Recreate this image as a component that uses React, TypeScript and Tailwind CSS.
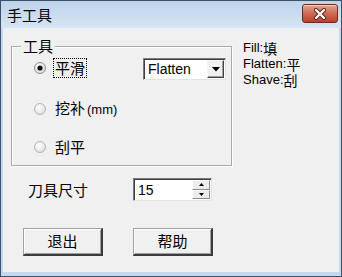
const cjk = { fontFamily: '"Noto Sans CJK SC", "Liberation Sans", sans-serif' };
const latin = { fontFamily: '"Liberation Sans", Arial, "Noto Sans CJK SC", sans-serif' };

function Radio({ checked }: { checked?: boolean }) {
  return (
    <svg width="12" height="12" viewBox="0 0 12 12" className="shrink-0">
      <defs>
        <radialGradient id={checked ? "rg1" : "rg0"} cx="0.4" cy="0.35" r="0.7">
          <stop offset="0" stopColor="#ffffff" />
          <stop offset="1" stopColor="#dcdcdc" />
        </radialGradient>
      </defs>
      <circle cx="6" cy="6" r="5.5" fill={`url(#${checked ? "rg1" : "rg0"})`} stroke={checked ? "#8a8a8a" : "#b4b4b4"} />
      {checked && <circle cx="6" cy="6" r="2.6" fill="#141414" />}
    </svg>
  );
}

function CloseButton() {
  return (
    <div className="flex h-[19px] w-[36px] items-center justify-center rounded-[3px] border border-[#6b2a1f] bg-gradient-to-b from-[#e3a593] via-[#cf6a55] to-[#b8402c] shadow-[inset_0_1px_0_rgba(255,255,255,0.5)]">
      <svg width="14" height="12" viewBox="0 0 14 12">
        <path d="M3 2 L11 10 M11 2 L3 10" stroke="#5a1e14" strokeWidth="4" strokeLinecap="round" />
        <path d="M3 2 L11 10 M11 2 L3 10" stroke="#ffffff" strokeWidth="2.4" strokeLinecap="round" />
      </svg>
    </div>
  );
}

function Button({ label }: { label: string }) {
  return (
    <div
      style={cjk}
      className="flex h-[28px] w-[80px] items-center justify-center border-t border-l border-t-[#a0a0a0] border-l-[#a0a0a0] border-r-2 border-b-2 border-r-[#3c3c3c] border-b-[#3c3c3c] bg-[#f0f0f0] text-[15px] text-black shadow-[inset_1px_1px_0_#ffffff,inset_-1px_-1px_0_#a0a0a0]"
    >
      {label}
    </div>
  );
}

function KeyLine({ name, char }: { name: string; char: string }) {
  return (
    <div className="flex h-[15px] items-center">
      <span className="inline-block h-[15px] leading-[15px]">{name}:</span>
      <span style={cjk} className="inline-block h-[14px] overflow-visible text-[14px] leading-[14px]">
        {char}
      </span>
    </div>
  );
}

export default function App() {
  return (
    <div className="flex h-[277px] w-[342px] flex-col border border-[#3d5168] bg-[#c4d9ee]">
      {/* title bar */}
      <div className="flex h-[27px] items-center justify-between bg-gradient-to-b from-[#bed3ea] to-[#d7e5f4] pl-[6px] pr-[3px]">
        <span style={cjk} className="text-[15px] leading-none text-black">手工具</span>
        <div className="-mt-[2px]">
          <CloseButton />
        </div>
      </div>

      {/* client area */}
      <div className="mx-[2px] mb-[4px] flex flex-1 flex-col bg-[#f0f0f0]">
        <div className="flex items-start">
          {/* group box */}
          <div className="relative ml-[8px] mt-[18px] flex h-[120px] w-[221px] flex-col border border-[#a9a9a9] shadow-[1px_1px_0_#ffffff,inset_1px_1px_0_#ffffff]">
            <span style={cjk} className="absolute -top-[10px] left-[9px] bg-[#f0f0f0] px-[2px] text-[15px] leading-[18px] text-black">
              工具
            </span>

            <div className="mt-[11px] flex h-[20px] items-center">
              <div className="ml-[22px]">
                <Radio checked />
              </div>
              <span style={cjk} className="ml-[7px] border border-dotted border-black px-[1px] text-[15px] leading-[18px] text-black">
                平滑
              </span>
              <div className="ml-auto mr-[5px] flex h-[22px] w-[83px] self-start border border-t-[#7a7a7a] border-l-[#7a7a7a] border-r-[#e3e3e3] border-b-[#e3e3e3] bg-white shadow-[inset_1px_1px_0_#404040]">
                <span style={latin} className="flex-1 pl-[4px] pt-[2px] text-[14px] leading-[17px] text-black">Flatten</span>
                <div className="my-[1px] mr-[1px] flex w-[17px] items-center justify-center border-t border-l border-t-[#f5f5f5] border-l-[#f5f5f5] border-r border-b border-r-[#404040] border-b-[#404040] bg-[#f0f0f0] shadow-[inset_-1px_-1px_0_#a0a0a0]">
                  <svg width="8" height="5" viewBox="0 0 8 5">
                    <path d="M0 0 H8 L4 4.5 Z" fill="#000" />
                  </svg>
                </div>
              </div>
            </div>

            <div className="mt-[21px] flex h-[20px] items-center">
              <div className="ml-[22px]">
                <Radio />
              </div>
              <span style={cjk} className="ml-[9px] text-[15px] leading-[18px] text-black">
                挖补
                <span style={latin} className="ml-[2px] text-[13px]">(mm)</span>
              </span>
            </div>

            <div className="mt-[18px] flex h-[20px] items-center">
              <div className="ml-[22px]">
                <Radio />
              </div>
              <span style={cjk} className="ml-[9px] text-[15px] leading-[18px] text-black">刮平</span>
            </div>
          </div>

          {/* legend text */}
          <div style={latin} className="ml-[11px] mt-[12px] flex flex-col gap-[1px] text-[13px] text-black">
            <KeyLine name="Fill" char="填" />
            <KeyLine name="Flatten" char="平" />
            <KeyLine name="Shave" char="刮" />
          </div>
        </div>

        {/* tool size */}
        <div className="mt-[12px] flex h-[23px] items-center">
          <span style={cjk} className="ml-[25px] w-[105px] text-[15px] leading-[18px] text-black">刀具尺寸</span>
          <div className="flex h-[23px] w-[79px] border border-t-[#7a7a7a] border-l-[#7a7a7a] border-r-[#e3e3e3] border-b-[#e3e3e3] bg-white shadow-[inset_1px_1px_0_#404040]">
            <span style={latin} className="flex-1 pl-[4px] pt-[2px] text-[14px] leading-[18px] text-black">15</span>
            <div className="my-[1px] mr-[1px] flex w-[18px] flex-col">
              <div className="flex flex-1 items-center justify-center border-r border-b border-r-[#8a8a8a] border-b-[#8a8a8a] border-t border-l border-t-white border-l-white bg-[#ececec]">
                <svg width="5" height="3" viewBox="0 0 5 3">
                  <path d="M0 3 H5 L2.5 0 Z" fill="#000" />
                </svg>
              </div>
              <div className="flex flex-1 items-center justify-center border-r border-b border-r-[#8a8a8a] border-b-[#8a8a8a] border-t border-l border-t-white border-l-white bg-[#ececec]">
                <svg width="5" height="3" viewBox="0 0 5 3">
                  <path d="M0 0 H5 L2.5 3 Z" fill="#000" />
                </svg>
              </div>
            </div>
          </div>
        </div>

        {/* buttons */}
        <div className="ml-[20px] mt-[27px] flex gap-[30px]">
          <Button label="退出" />
          <Button label="帮助" />
        </div>
      </div>
    </div>
  );
}
